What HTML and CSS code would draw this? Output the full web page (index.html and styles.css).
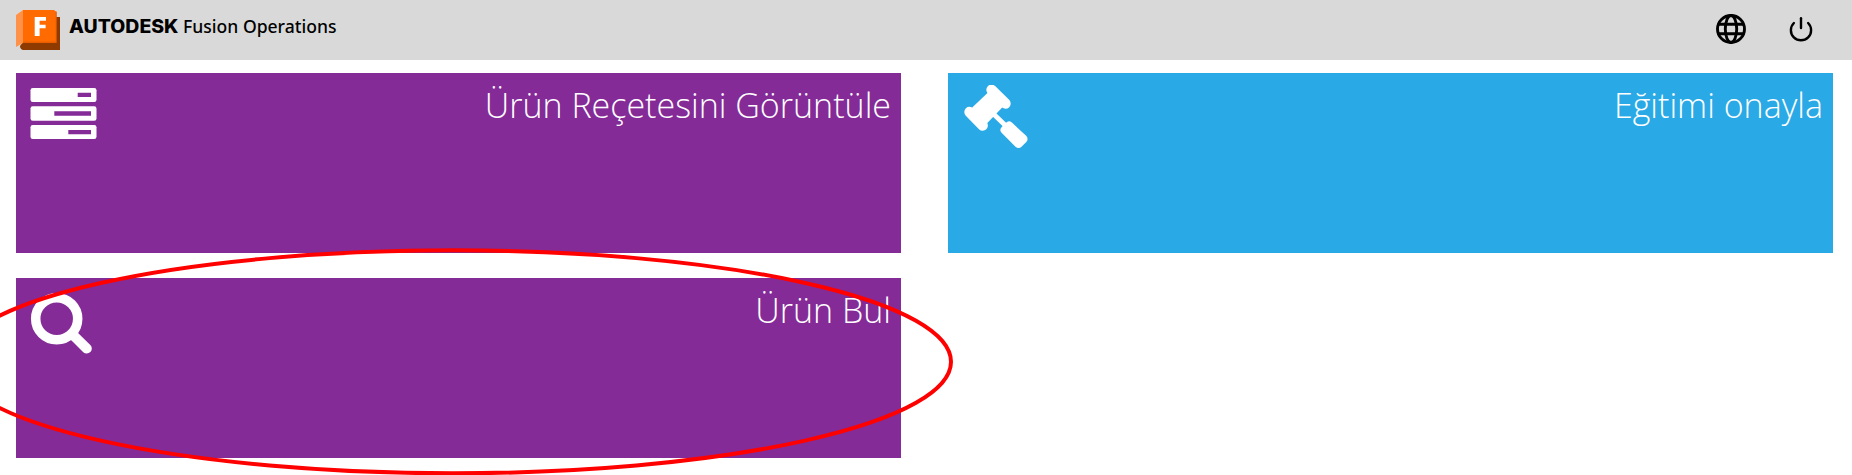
FILE: index.html
```html
<!DOCTYPE html>
<html lang="tr">
<head>
<meta charset="utf-8">
<title>Autodesk Fusion Operations</title>
<link rel="stylesheet" href="styles.css">
</head>
<body>
<header class="topbar">
  <div class="brand">
    <svg class="brand-mark" width="44" height="40" viewBox="0 0 44 40">
      <path fill="#8f3b00" d="M40 7h4v33H7q-3-1-3-4l3-4z"/>
      <path fill="#ff9248" d="M0 5 7 0v33l-7 4z"/>
      <path fill="#ff6b00" d="M7 0h31l2.500 2V33H7z"/>
      <path fill="#d65300" d="M7 32.500h33.500V1.500h-.7v30.300H7z"/>
      <path fill="#fff" d="M18.700 7H30v3.800h-6.400v4h6v3.500h-6v7.700h-4.900z"/>
    </svg>
    <svg class="brand-name" width="280" height="40" viewBox="0 0 280 40">
      <text class="brand-bold" x="-1" y="23" textLength="109.500" lengthAdjust="spacingAndGlyphs">AUTODESK</text>
      <text class="brand-light" x="113" y="23" textLength="153.500" lengthAdjust="spacingAndGlyphs">Fusion Operations</text>
    </svg>
  </div>
  <nav class="actions">
    <svg width="30" height="30" viewBox="0 0 30 30" fill="none" stroke="#000" stroke-width="2.900">
      <circle cx="15" cy="15" r="13.500"/>
      <ellipse cx="15" cy="15" rx="5.700" ry="13.500"/>
      <path d="M2.500 10.300h25M2.500 19.700h25"/>
    </svg>
    <svg width="24" height="26" viewBox="0 0 24 26" fill="none" stroke="#000" stroke-width="2.400" stroke-linecap="round">
      <path d="M12 2.200V12"/>
      <path d="M4.900 7a10.100 10.100 0 1 0 14.200 0"/>
    </svg>
  </nav>
</header>
<main class="tiles">
  <a class="tile purple">
    <svg class="tile-icon" width="70" height="70" viewBox="0 0 70 70">
      <g fill="#fff"><rect x="2.500" y="3" width="66" height="14" rx="2.300"/><rect x="2.500" y="21.300" width="66" height="14.400" rx="2.300"/><rect x="2.500" y="40" width="66" height="14" rx="2.300"/></g>
      <path fill="#842b98" d="M49.700 7.700H63V12H49.700zM26.300 26.300H63v4.400H26.300zM40.300 45H63v4.300H40.300z"/>
    </svg>
    <span class="tile-title">Ürün Reçetesini Görüntüle</span>
  </a>
  <a class="tile blue">
    <svg class="tile-icon" width="70" height="70" viewBox="0 0 70 70">
      <g fill="#fff" stroke="#fff" stroke-linecap="round" stroke-linejoin="round">
        <path d="M31.500 4.800 45.500 18.500M9.500 27 22.700 40.500" stroke-width="10.400"/>
        <path stroke="none" d="M26.700 8.700 31.500 4.800 45.500 18.500 42 22.700 27.300 38 22.700 40.500 9.500 27 12.700 22z"/>
        <path d="M33 28.500 46 41" stroke-width="4.800"/>
        <path d="M49 40.700 44.800 45 58.500 58.700 63.300 53.900z" stroke-width="8.500"/>
      </g>
    </svg>
    <span class="tile-title">Eğitimi onayla</span>
  </a>
  <a class="tile purple">
    <svg class="tile-icon" width="70" height="70" viewBox="0 0 70 70" fill="none" stroke="#fff">
      <circle cx="28.700" cy="28.700" r="21" stroke-width="9.500"/>
      <path d="M44 44 58.800 58.600" stroke-width="10" stroke-linecap="round"/>
    </svg>
    <span class="tile-title">Ürün Bul</span>
  </a>
</main>
<svg class="highlight" width="1852" height="475" viewBox="0 0 1852 475">
  <ellipse cx="453" cy="361.800" rx="498" ry="111.500"/>
</svg>
</body>
</html>
```
FILE: styles.css
```css
body {
  margin: 0;
  height: 475px;
  overflow: hidden;
  background: #fff;
  font-family: "Open Sans", sans-serif;
}
.topbar {
  display: flex;
  justify-content: space-between;
  height: 60px;
  box-sizing: border-box;
  padding: 10px 28px 0 16px;
  background: #d9d9d9;
}
.brand { display: flex; gap: 10px; }
.brand-name { overflow: visible; }
.brand-bold { font: 800 18.3px Inter, sans-serif; }
.brand-light { font: 500 18.6px "Noto Sans", sans-serif; }
.actions {
  display: flex;
  align-items: center;
  gap: 43px;
  height: 38px;
  padding-right: 11px;
}
.tiles {
  display: grid;
  grid-template-columns: 885px 885px;
  grid-auto-rows: 180px;
  gap: 25px 47px;
  padding: 13px 0 0 16px;
}
.tile {
  display: flex;
  justify-content: space-between;
  align-items: flex-start;
  box-sizing: border-box;
  padding: 12px 10px 0 12px;
  color: #fff;
}
.purple { background: #842b98; }
.blue { background: #29a9e5; }
.tile-icon { flex: none; }
.tile-title {
  font-size: 34px;
  font-weight: 300;
  line-height: 40px;
}
.highlight {
  position: absolute;
  top: 0;
  left: 0;
  pointer-events: none;
}
.highlight ellipse {
  fill: none;
  stroke: #f00;
  stroke-width: 4;
}
```
